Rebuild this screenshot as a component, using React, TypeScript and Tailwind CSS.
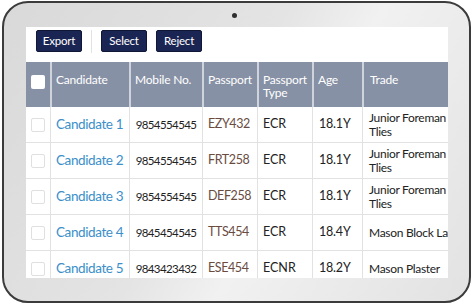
import React from 'react';

type Row = {
  name: string;
  mobile: string;
  passport: string;
  type: string;
  age: string;
  trade: string[];
};

const rows: Row[] = [
  { name: 'Candidate 1', mobile: '9854554545', passport: 'EZY432', type: 'ECR', age: '18.1Y', trade: ['Junior Foreman', 'Tlies'] },
  { name: 'Candidate 2', mobile: '9854554545', passport: 'FRT258', type: 'ECR', age: '18.1Y', trade: ['Junior Foreman', 'Tlies'] },
  { name: 'Candidate 3', mobile: '9854554545', passport: 'DEF258', type: 'ECR', age: '18.1Y', trade: ['Junior Foreman', 'Tlies'] },
  { name: 'Candidate 4', mobile: '9845454545', passport: 'TTS454', type: 'ECR', age: '18.4Y', trade: ['Mason Block Layer'] },
  { name: 'Candidate 5', mobile: '9843423432', passport: 'ESE454', type: 'ECNR', age: '18.2Y', trade: ['Mason Plaster'] },
];

const cols = 'grid grid-cols-[24px_79px_73px_55px_55px_50px_86px]';

export default function App() {
  return (
    <div className="w-[474px] h-[305px] bg-white overflow-hidden font-['Lato',sans-serif]">
      {/* Tablet shell */}
      <div className="ml-[2px] mt-[1px] w-[469px] h-[302px] rounded-[26px] border-2 border-[#3b3b3b] bg-[linear-gradient(120deg,#d9d9d9_0%,#e4e4e4_45%,#f1f1f1_60%,#e2e2e2_100%)] px-[22px] flex flex-col">
        <div className="h-[24px] flex items-center justify-center pr-[5px]">
          <div className="w-[5px] h-[5px] rounded-full bg-[#2e2e2e]" />
        </div>

        {/* Screen */}
        <div className="w-[422px] h-[251px] bg-white overflow-hidden flex flex-col">
          {/* Toolbar */}
          <div className="h-[35px] shrink-0 flex items-start pt-[3px] pl-[10px]">
            <button className="w-[46px] h-[22px] rounded-[2px] bg-[#1b2553] border border-[#0f1636] text-white text-[11.5px] leading-none tracking-[-0.2px]">
              Export
            </button>
            <div className="w-px h-[23px] bg-[#e2e2e2] ml-[9px] mr-[9px]" />
            <button className="w-[46px] h-[22px] rounded-[2px] bg-[#1b2553] border border-[#0f1636] text-white text-[11.5px] leading-none tracking-[-0.2px]">
              Select
            </button>
            <button className="ml-[9px] w-[46px] h-[22px] rounded-[2px] bg-[#1b2553] border border-[#0f1636] text-white text-[11.5px] leading-none tracking-[-0.2px]">
              Reject
            </button>
          </div>

          {/* Header */}
          <div className={`${cols} h-[45px] shrink-0 bg-[#8791a5] text-white text-[12px] leading-[13px] tracking-[-0.2px]`}>
            <div className="flex justify-center pt-[13px]">
              <div className="w-[14px] h-[14px] rounded-[2px] bg-white" />
            </div>
            <div className="border-l-2 border-[#cfd3dc] pl-[4px] pt-[11px]">Candidate</div>
            <div className="border-l-2 border-[#cfd3dc] pl-[4px] pt-[11px]">Mobile No.</div>
            <div className="border-l-2 border-[#cfd3dc] pl-[4px] pt-[11px]">Passport</div>
            <div className="border-l-2 border-[#cfd3dc] pl-[4px] pt-[11px]">Passport Type</div>
            <div className="border-l-2 border-[#cfd3dc] pl-[4px] pt-[11px]">Age</div>
            <div className="border-l-2 border-[#cfd3dc] pl-[6px] pt-[11px]">Trade</div>
          </div>

          {/* Body */}
          {rows.map((r) => (
            <div key={r.name} className={`${cols} h-[36px] shrink-0 border-b border-[#e2e2e2] text-[#222] whitespace-nowrap`}>
              <div className="flex items-center justify-center">
                <div className="w-[14px] h-[14px] rounded-[2px] border border-[#e0e0e0] bg-white" />
              </div>
              <div className="border-l border-[#e2e2e2] flex items-center pl-[5px] text-[13.5px] tracking-[-0.4px] text-[#3b8fca]">
                {r.name}
              </div>
              <div className="border-l border-[#e2e2e2] flex items-center justify-center text-[11.5px] tracking-[-0.6px]">
                {r.mobile}
              </div>
              <div className="border-l border-[#e2e2e2] flex items-center pl-[5px] text-[12.5px] tracking-[-0.4px] text-[#6a4c3f]">
                {r.passport}
              </div>
              <div className="border-l border-[#e2e2e2] flex items-center pl-[5px] text-[12.5px]">
                {r.type}
              </div>
              <div className="border-l border-[#e2e2e2] flex items-center pl-[6px] text-[12.5px] tracking-[-0.2px]">
                {r.age}
              </div>
              <div className="border-l border-[#e2e2e2] flex flex-col justify-center pl-[6px] text-[12px] leading-[14px] tracking-[-0.3px] overflow-hidden">
                {r.trade.map((t) => (
                  <span key={t}>{t}</span>
                ))}
              </div>
            </div>
          ))}
        </div>
      </div>
    </div>
  );
}
